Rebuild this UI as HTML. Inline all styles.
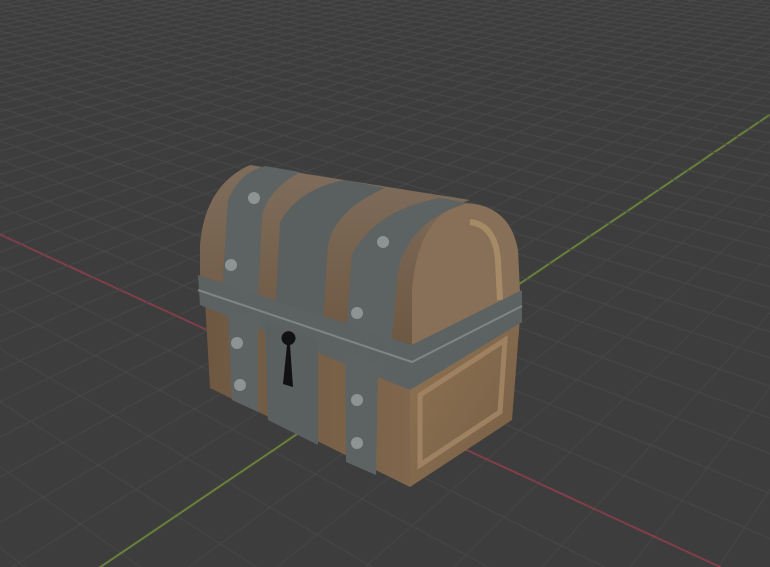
<!DOCTYPE html>
<html><head><style>
html,body{margin:0;padding:0;background:#3d3d3d;overflow:hidden}
#c{position:absolute;left:0;top:0}
svg{position:absolute;left:0;top:0}
</style></head><body>
<canvas id="c" width="770" height="567"></canvas>
<svg width="770" height="567" viewBox="0 0 770 567">
<defs>
<linearGradient id="wf" x1="0" y1="0" x2="1" y2="0"><stop offset="0" stop-color="#6e5842"/><stop offset="1" stop-color="#7f664c"/></linearGradient>
<linearGradient id="ws" x1="0" y1="0" x2="1" y2="1"><stop offset="0" stop-color="#8f7353"/><stop offset="1" stop-color="#765e45"/></linearGradient>
<linearGradient id="lid" x1="0" y1="0" x2="0" y2="1"><stop offset="0" stop-color="#7f6d5c"/><stop offset="1" stop-color="#6d5842"/></linearGradient>
</defs>
<polygon points="205,300 410,385 410,487 210,388" fill="url(#wf)"/>
<polygon points="410,385 520,318 512,420 410,487" fill="url(#ws)"/>
<polygon points="420,395 505,340 500,412 420,465" fill="none" stroke="#9e8160" stroke-width="5"/>
<path d="M200,278 L200,245 Q205,185 250,165 L470,200 Q420,215 412,290 L412,345 Z" fill="url(#lid)"/>
<path d="M412,345 L412,290 Q418,215 465,203 Q510,205 518,250 L520,292 Z" fill="#887058"/>
<path d="M470,222 Q495,225 498,260 L500,300" fill="none" stroke="#a58a66" stroke-width="6"/>
<path d="M222,292 L228,200 Q240,172 265,166 L300,172 Q268,190 262,215 L258,300 Z" fill="#5d6263"/>
<path d="M275,315 L280,222 Q300,188 345,180 L385,188 Q335,210 328,245 L322,335 Z" fill="#5a5f60"/>
<path d="M345,345 L352,255 Q375,210 440,198 L468,203 Q410,220 398,270 L390,360 Z" fill="#5d6263"/>
<polygon points="198,275 412,345 522,290 522,322 410,390 200,305" fill="#5c6162"/>
<polyline points="198,290 412,362 522,306" fill="none" stroke="#7f8586" stroke-width="2"/>
<polygon points="228,310 258,320 258,412 232,400" fill="#5d6263"/>
<polygon points="265,322 318,340 318,445 268,420" fill="#5a5f60"/>
<polygon points="345,352 378,364 376,475 346,462" fill="#5d6263"/>
<path d="M287,345 a7,7 0 1 1 3,0 l3,42 l-10,-3 Z" fill="#111"/>
<g fill="#8e9494">
<circle cx="254" cy="198" r="6"/><circle cx="231" cy="265" r="6"/>
<circle cx="383" cy="242" r="6"/><circle cx="357" cy="313" r="6"/>
<circle cx="237" cy="343" r="6"/><circle cx="240" cy="385" r="6"/>
<circle cx="357" cy="400" r="6"/><circle cx="357" cy="443" r="6"/>
</g>
</svg>
<script>
var c=document.getElementById('c').getContext('2d');
c.fillStyle='#3d3d3d';c.fillRect(0,0,770,567);
var O=[352,397],R=[-919,-190],G=[1221,-190],a=0.032,b=0.042;
function P(u,v){var d=1+a*u+b*v;return [(O[0]+a*u*R[0]+b*v*G[0])/d,(O[1]+a*u*R[1]+b*v*G[1])/d];}
function line(f,col,w){c.strokeStyle=col;c.lineWidth=w;c.beginPath();var s=true;for(var t=-200;t<=3000;t+=0.5){var p=f(t);if(!p){s=true;continue;}if(s){c.moveTo(p[0],p[1]);s=false;}else c.lineTo(p[0],p[1]);}c.stroke();}
for(var i=-80;i<=200;i++){
 (function(i){
 line(function(v){var d=1+a*i+b*v;if(d<0.03)return null;return P(i,v);},i==0?'#7a9a3a':'#4b4b4b',i==0?1.5:1);
 line(function(u){var d=1+a*u+b*i;if(d<0.03)return null;return P(u,i);},i==0?'#9a4050':'#4b4b4b',i==0?1.5:1);
 })(i);
}
</script>
</body></html>
